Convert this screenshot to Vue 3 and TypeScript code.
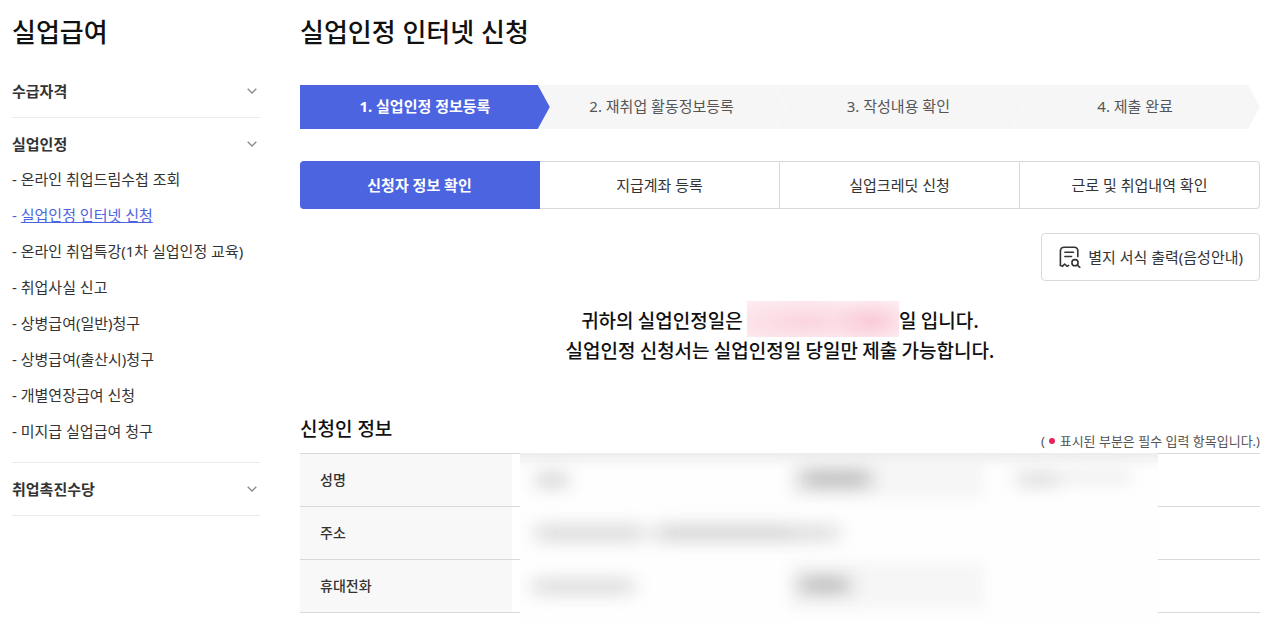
<script setup lang="ts">
interface MenuGroup {
  title: string
  links: string[]
}

const groups: MenuGroup[] = [
  { title: '수급자격', links: [] },
  {
    title: '실업인정',
    links: [
      '온라인 취업드림수첩 조회',
      '실업인정 인터넷 신청',
      '온라인 취업특강(1차 실업인정 교육)',
      '취업사실 신고',
      '상병급여(일반)청구',
      '상병급여(출산시)청구',
      '개별연장급여 신청',
      '미지급 실업급여 청구',
    ],
  },
  { title: '취업촉진수당', links: [] },
]
const currentLink = '실업인정 인터넷 신청'
const steps: string[] = ['1. 실업인정 정보등록', '2. 재취업 활동정보등록', '3. 작성내용 확인', '4. 제출 완료']
const tabs: string[] = ['신청자 정보 확인', '지급계좌 등록', '실업크레딧 신청', '근로 및 취업내역 확인']
const rows: string[] = ['성명', '주소', '휴대전화']
</script>

<template>
  <div class="page">
    <aside class="side">
      <h2 class="title">실업급여</h2>
      <nav>
        <section v-for="group in groups" :key="group.title" class="group">
          <button type="button" class="group-head">
            <span>{{ group.title }}</span>
            <svg class="chevron" viewBox="0 0 10 6" aria-hidden="true"><path d="M0.7 0.7 5 5 9.3 0.7" /></svg>
          </button>
          <ul v-if="group.links.length" class="links">
            <li v-for="link in group.links" :key="link" :class="{ current: link === currentLink }">
              - <a href="#">{{ link }}</a>
            </li>
          </ul>
        </section>
      </nav>
    </aside>

    <main class="main">
      <h1 class="title">실업인정 인터넷 신청</h1>

      <ol class="steps">
        <li v-for="(step, i) in steps" :key="step" :class="{ active: i === 0 }">{{ step }}</li>
      </ol>

      <div class="tabs">
        <button v-for="(tab, i) in tabs" :key="tab" type="button" :class="{ active: i === 0 }">{{ tab }}</button>
      </div>

      <div class="tools">
        <button type="button" class="print">
          <svg class="print-icon" viewBox="0 0 22 22" aria-hidden="true">
            <path d="M1.4 19.4V5.2C1.4 2.6 2.8 1.3 5.2 1.3H15.2C17.5 1.3 18.8 2.6 18.8 5V10.6" />
            <path d="M1.4 19.4 3.4 20.4 5.6 18 8.2 20.3 9.6 19.4M5.9 6.3H14.5M5.9 10.5H12.5" />
            <circle cx="16" cy="16.7" r="3.1" />
            <path d="M18.3 19 20.8 21.3" />
          </svg>
          <span>별지 서식 출력(음성안내)</span>
        </button>
      </div>

      <p class="notice">
        귀하의 실업인정일은 <span class="hidden-date"></span>일 입니다.<br />
        실업인정 신청서는 실업인정일 당일만 제출 가능합니다.
      </p>

      <div class="section-head">
        <h3>신청인 정보</h3>
        <p>( <i class="dot"></i> 표시된 부분은 필수 입력 항목입니다.)</p>
      </div>

      <div class="table-wrap">
        <table>
          <tbody>
            <tr v-for="row in rows" :key="row">
              <th scope="row">{{ row }}</th>
              <td></td>
            </tr>
          </tbody>
        </table>
        <svg class="redaction" viewBox="0 0 638 170" preserveAspectRatio="none" aria-hidden="true">
          <defs>
            <filter id="soft" filterUnits="userSpaceOnUse" x="-40" y="-40" width="720" height="250" color-interpolation-filters="sRGB"><feGaussianBlur stdDeviation="10 8" /></filter>
            <filter id="edge" filterUnits="userSpaceOnUse" x="-40" y="-40" width="720" height="250" color-interpolation-filters="sRGB"><feGaussianBlur stdDeviation="6" /></filter>
          </defs>
          <rect width="638" height="170" fill="#fefefe" />
          <g filter="url(#edge)">
            <rect x="-20" y="-20" width="680" height="27" fill="#ebebeb" />
            <rect x="270" y="4" width="194" height="42" fill="#f6f6f6" />
            <rect x="270" y="109" width="194" height="47" fill="#f6f6f6" />
          </g>
          <g filter="url(#soft)">
            <rect x="17" y="18" width="30" height="18" fill="#d9d9d9" />
            <rect x="282" y="17" width="68" height="18" fill="#c0c0c0" />
            <rect x="498" y="18" width="40" height="16" fill="#dedede" />
            <rect x="540" y="17" width="70" height="12" fill="#ececec" />
            <rect x="16" y="71" width="108" height="18" fill="#dddddd" />
            <rect x="136" y="71" width="136" height="18" fill="#d8d8d8" />
            <rect x="272" y="71" width="46" height="18" fill="#e0e0e0" />
            <rect x="13" y="125" width="100" height="17" fill="#dedede" />
            <rect x="280" y="123" width="49" height="18" fill="#c0c0c0" />
          </g>
        </svg>
      </div>
    </main>
  </div>
</template>

<style>
body {
  margin: 0;
  background: #fff;
}
</style>

<style scoped>
.page {
  display: grid;
  grid-template-columns: 248px minmax(0, 1fr);
  column-gap: 40px;
  padding: 12px 13px 25px 12px;
  color: #333;
  font-family: "Noto Sans", "Noto Sans CJK KR", sans-serif;
  font-size: 15px;
  line-height: 24px;
}
h1, h2, h3, p, ul, ol {
  margin: 0;
  padding: 0;
}
ul, ol {
  list-style: none;
}
button {
  font: inherit;
  color: inherit;
  background: none;
  border: 0;
  padding: 0;
}
.title {
  font-size: 26px;
  line-height: 40px;
  font-weight: 500;
  color: #111;
}
nav {
  margin-top: 13px;
}
.group {
  border-bottom: 1px solid #ebebeb;
}
.group-head {
  display: flex;
  align-items: center;
  justify-content: space-between;
  width: 100%;
  height: 52px;
  padding-right: 3px;
  font-weight: 700;
}
.chevron {
  width: 10px;
  height: 6px;
  fill: none;
  stroke: #8c8c8c;
  stroke-width: 1.4;
}
.links {
  margin-top: -3px;
  padding-bottom: 7px;
}
.links li {
  height: 36px;
}
.links a {
  color: inherit;
  text-decoration: none;
}
.links .current {
  color: #4c64df;
}
.links .current a {
  text-decoration: underline;
}
.steps {
  display: flex;
  margin-top: 33px;
}
.steps li {
  position: relative;
  flex: 1;
  height: 44px;
  line-height: 42px;
  text-align: center;
  color: #555;
  background: #f6f6f6;
  clip-path: polygon(0 0, calc(100% - 12px) 0, 100% 50%, calc(100% - 12px) 100%, 0 100%);
}
.steps li + li {
  margin-left: -13px;
}
.steps li + li::before {
  content: "";
  position: absolute;
  left: 0;
  top: 0;
  width: 14px;
  height: 44px;
  background: #f8f8f8;
  clip-path: polygon(0 0, 2px 0, 14px 50%, 2px 100%, 0 100%, 12px 50%);
}
.steps .active {
  z-index: 1;
  color: #fff;
  font-weight: 700;
  background: #4c64df;
}
.tabs {
  display: grid;
  grid-template-columns: repeat(4, 1fr);
  margin-top: 32px;
}
.tabs button {
  height: 48px;
  border: 1px solid #d9d9d9;
  border-left-width: 0;
}
.tabs button:last-child {
  border-radius: 0 4px 4px 0;
}
.tabs .active {
  color: #fff;
  font-weight: 700;
  background: #4c64df;
  border-color: #4c64df;
  border-radius: 4px 0 0 4px;
}
.tools {
  display: flex;
  justify-content: flex-end;
  margin-top: 24px;
}
.print {
  display: flex;
  align-items: center;
  gap: 7px;
  height: 48px;
  padding: 0 16px 0 17px;
  border: 1px solid #d9d9d9;
  border-radius: 4px;
}
.print-icon {
  width: 22px;
  height: 22px;
  fill: none;
  stroke: #333;
  stroke-width: 1.6;
  stroke-linejoin: round;
  stroke-linecap: round;
}
.notice {
  margin-top: 24px;
  text-align: center;
  font-family: "Noto Sans CJK KR", "Noto Sans", sans-serif;
  font-size: 19px;
  line-height: 30px;
  font-weight: 500;
  color: #111;
}
.hidden-date {
  display: inline-block;
  width: 152px;
  height: 36px;
  margin: -4px 0 -2px;
  vertical-align: top;
  background:
    radial-gradient(ellipse 40px 22px at 82% 56%, #facbd8, transparent),
    radial-gradient(ellipse 90px 24px at 38% 58%, #fbd5df, transparent),
    #fdebf0;
}
.section-head {
  display: flex;
  align-items: flex-end;
  justify-content: space-between;
  margin-top: 50px;
}
.section-head h3 {
  font-size: 19px;
  line-height: 28px;
  font-weight: 500;
  color: #111;
  padding-bottom: 10px;
}
.section-head p {
  font-size: 13px;
  line-height: 24px;
  color: #555;
}
.dot {
  display: inline-block;
  width: 6px;
  height: 6px;
  margin: 0 1px;
  border-radius: 50%;
  background: #e6235f;
  vertical-align: 2px;
}
.table-wrap {
  position: relative;
}
table {
  width: 100%;
  border-collapse: collapse;
  border-top: 1px solid #d9d9d9;
  font-size: 14px;
}
tr {
  height: 53px;
  border-bottom: 1px solid #d9d9d9;
}
th {
  width: 212px;
  box-sizing: border-box;
  padding: 0 20px;
  text-align: left;
  font-weight: 500;
  background: #f8f8f8;
}
td {
  padding: 0;
}
.redaction {
  position: absolute;
  left: 220px;
  top: 0;
  width: calc(100% - 322px);
  height: 170px;
}
</style>
